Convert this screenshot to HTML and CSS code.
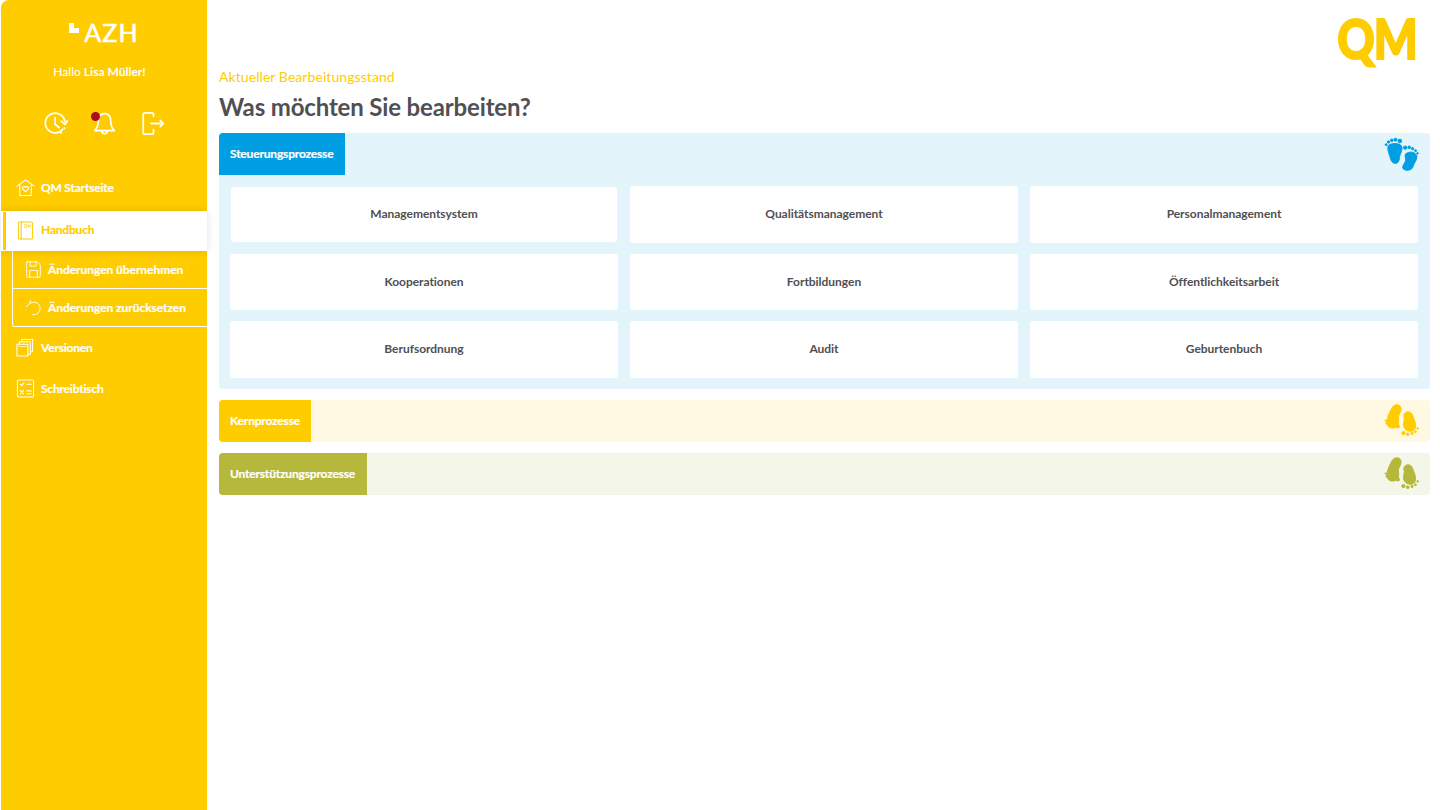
FILE: index.html
```html
<!DOCTYPE html>
<html lang="de">
<head>
<meta charset="utf-8">
<title>QM Handbuch</title>
<link rel="stylesheet" href="styles.css">
</head>
<body>
<svg class="defs" width="0" height="0" aria-hidden="true">
  <symbol id="feet-up" viewBox="190 410 110 105">
    <path d="M204 442C203 430 226 427 239 432C250 437 247 451 241 463C237 473 241 489 226 489C213 489 212 472 208 462C205 454 204 448 204 442Z"/>
    <circle cx="199" cy="433" r="3"/><circle cx="206" cy="425" r="3.500"/><circle cx="216" cy="420" r="4"/><circle cx="227" cy="418" r="4.500"/><circle cx="240" cy="422" r="5.500"/>
    <path d="M257 461C269 451 289 455 291 468C292 480 282 488 280 498C277 511 258 513 250 505C245 498 255 490 257 481C258 473 254 467 257 461Z"/>
    <circle cx="256" cy="442" r="5"/><circle cx="268" cy="441" r="4"/><circle cx="278" cy="445" r="3.500"/><circle cx="287" cy="451" r="3"/><circle cx="293" cy="459" r="2.500"/>
  </symbol>
  <symbol id="feet-down" viewBox="130 40 110 100">
    <path d="M158 52C166 41 184 44 184 58C184 70 173 76 176 88C179 102 174 116 158 116C144 116 138 104 141 92C144 78 150 64 158 52Z"/>
    <circle cx="137" cy="93" r="2"/><circle cx="140" cy="101" r="2.500"/><circle cx="150" cy="109" r="3"/><circle cx="162" cy="111" r="3.500"/><circle cx="174" cy="111" r="5"/>
    <path d="M192 76C198 62 214 64 219 78C224 92 232 108 225 120C216 130 197 127 192 112C189 100 196 92 192 76Z"/>
    <circle cx="191" cy="131" r="5"/><circle cx="204" cy="135" r="4"/><circle cx="217" cy="132" r="3.500"/><circle cx="227" cy="127" r="3"/><circle cx="234" cy="117" r="2.500"/>
  </symbol>
</svg>
<div class="app">
  <aside class="sidebar">
    <div class="brand">
      <span class="brand-mark"></span>
      <span class="brand-name">AZH</span>
    </div>
    <p class="hello">Hallo <b>Lisa Müller!</b></p>
    <div class="quick">
      <svg class="quick-icon" viewBox="0 0 28 28"><path d="M22 20.500A11 11 0 1 1 24.500 12"/><path d="M13.500 7.500V15l4.500 3.500"/><path d="M20.500 11.500l4 3.500 3-4"/><path d="M24 19v.5M20 24v.5"/></svg>
      <span class="bell">
        <svg class="quick-icon" viewBox="0 0 28 28"><path d="M14 3c-5 0-7 4-7 9 0 5-2 8-4 10h22c-2-2-4-5-4-10 0-5-2-9-7-9Z"/><path d="M11 22.500c0 4 6 4 6 0"/></svg>
        <i class="bell-dot"></i>
      </span>
      <svg class="quick-icon" viewBox="0 0 28 28"><path d="M14 6V3.500C14 2 13.500 2 12 2H4.500C3 2 2.500 2.500 2.500 4v20c0 1.500.5 2 2 2H12c1.500 0 2-.5 2-2v-3"/><path d="M11 14h14M21.500 10.500 25 14l-3.500 3.500"/></svg>
    </div>
    <nav class="nav">
      <a class="nav-row nav-first">
        <svg class="nav-icon" viewBox="0 0 20 20"><path d="M1 8.500 10 2l9 6.500M4 7v11.500h12V7"/><path d="M10 14.500 7 11.500c-1-2 1.500-3.500 3-1.500 1.500-2 4-.5 3 1.500Z"/></svg>
        <span>QM Startseite</span>
      </a>
      <a class="nav-row nav-active">
        <svg class="nav-icon" viewBox="0 0 20 20"><rect x="2.500" y="1" width="15" height="18" rx="1.500"/><path d="M5.500 1v18"/><path class="thin" d="M9 4h2.500v2.500H9zM13 6.500V4l1 1.500L15 4v2.500"/></svg>
        <span>Handbuch</span>
      </a>
      <div class="subnav">
        <a class="sub-row">
          <svg class="sub-icon" viewBox="0 0 20 20"><path d="M2.500 1h12L18 4.500V17.500a1.500 1.500 0 0 1-1.500 1.500h-13A1.500 1.500 0 0 1 2 17.500V2.500A1.500 1.500 0 0 1 2.500 1Z"/><path d="M6 1v5h7V1M5.500 19v-8h9v8"/></svg>
          <span>Änderungen übernehmen</span>
        </a>
        <a class="sub-row">
          <svg class="sub-icon" viewBox="0 0 20 20"><path d="M6 5a7.500 7.500 0 1 1 3 13.500"/><path d="M6.500 2 5.500 5.500 1.500 9"/></svg>
          <span>Änderungen zurücksetzen</span>
        </a>
      </div>
      <a class="nav-row">
        <svg class="nav-icon" viewBox="0 0 20 20"><path d="M6 4V1.500h11.500v13H15M3.500 6.500V4H15v13h-2"/><rect x="1" y="6.500" width="11.500" height="12.500"/><path class="thin" d="M3 9h7.500"/></svg>
        <span>Versionen</span>
      </a>
      <a class="nav-row">
        <svg class="nav-icon" viewBox="0 0 20 20"><rect x="1.500" y="1" width="17" height="18" rx="1.500"/><path d="M4.500 5.500l1.500 1.500 2.500-3M11.500 5.500H16M4.500 12l3.500 4M8 12l-3.500 4M11.500 12.500H16M11.500 15.500H16"/></svg>
        <span>Schreibtisch</span>
      </a>
    </nav>
  </aside>
  <main class="content">
    <div class="qm-row"><span class="qm-logo">QM</span></div>
    <p class="eyebrow">Aktueller Bearbeitungsstand</p>
    <h1 class="title">Was möchten Sie bearbeiten?</h1>

    <section class="group group-blue">
      <header class="group-head">
        <span class="group-tab">Steuerungsprozesse</span>
        <svg class="feet"><use href="#feet-up"/></svg>
      </header>
      <div class="tiles">
        <a class="tile tile-first">Managementsystem</a>
        <a class="tile">Qualitätsmanagement</a>
        <a class="tile">Personalmanagement</a>
        <a class="tile">Kooperationen</a>
        <a class="tile">Fortbildungen</a>
        <a class="tile">Öffentlichkeitsarbeit</a>
        <a class="tile">Berufsordnung</a>
        <a class="tile">Audit</a>
        <a class="tile">Geburtenbuch</a>
      </div>
    </section>

    <section class="group group-yellow">
      <header class="group-head">
        <span class="group-tab">Kernprozesse</span>
        <svg class="feet feet-low"><use href="#feet-down"/></svg>
      </header>
    </section>

    <section class="group group-green">
      <header class="group-head">
        <span class="group-tab">Unterstützungsprozesse</span>
        <svg class="feet feet-low"><use href="#feet-down"/></svg>
      </header>
    </section>
  </main>
</div>
</body>
</html>
```

FILE: styles.css
```css
* { box-sizing: border-box; }
html, body { margin: 0; height: 100%; overflow: hidden; background: #fff; }
body { font-family: "Lato", "Liberation Sans", sans-serif; color: #4f4f52; }
.defs { display: block; height: 0; }
p, h1 { margin: 0; }

.app { display: flex; height: 810px; }

.sidebar {
  flex: 0 0 206px;
  margin-left: 1px;
  background: #ffcc00;
  border-top-left-radius: 8px;
  color: #fff;
}
.brand { display: flex; justify-content: center; align-items: flex-start; gap: 5px; padding-top: 19px; height: 52px; }
.brand-mark { width: 10px; height: 10px; margin-top: 4px; background: linear-gradient(#fff, #fff) 0 0 / 5px 10px no-repeat, linear-gradient(#fff, #fff) 0 100% / 10px 5px no-repeat; }
.brand-name { font-size: 25px; line-height: 26px; letter-spacing: 1.2px; font-weight: 400; -webkit-text-stroke: .6px #fff; }
.hello { font-size: 12px; line-height: 16px; text-align: center; padding: 12px 9px 0 0; height: 38px; }
.hello b { font-weight: 700; }
.quick { display: flex; justify-content: center; align-items: center; gap: 24px; height: 75px; padding: 3px 0 11px; }
.quick-icon { width: 25px; height: 25px; fill: none; stroke: #fff; stroke-width: 2; stroke-linecap: round; stroke-linejoin: round; display: block; }
.bell { position: relative; display: block; }
.bell-dot { position: absolute; left: -1px; top: 1px; width: 9px; height: 9px; border-radius: 50%; background: #b00a23; }

.nav { display: flex; flex-direction: column; }
.nav-row { display: flex; align-items: center; gap: 6px; height: 41px; padding-left: 15px; font-size: 12px; font-weight: 700; letter-spacing: -.2px; color: #fff; -webkit-text-stroke: .2px currentColor; }
.nav-first { height: 46px; padding-bottom: 1px; }
.nav-active { height: 40px; padding-left: 2px; padding-bottom: 3px; background: #fff; color: #ffcc00; box-shadow: 0 0 8px rgba(0,0,0,.12); position: relative; }
.nav-active::before { content: ""; flex: 0 0 3px; align-self: stretch; margin: 1px 0 -2px; background: #ffcc00; }
.nav-active .nav-icon { margin: 2px 0 0 4px; }
.nav-icon { width: 19px; height: 19px; flex: none; fill: none; stroke: currentColor; stroke-width: 1.1; stroke-linejoin: round; stroke-linecap: round; }
.thin { stroke-width: .7; }
.subnav { margin-left: 11px; border-left: 1px solid #fff; border-bottom-left-radius: 3px; }
.sub-row { display: flex; align-items: center; gap: 6px; height: 38px; padding: 0 0 1px 12px; border-bottom: 1px solid #fff; font-size: 12px; font-weight: 700; letter-spacing: -.05px; color: #fff; -webkit-text-stroke: .2px currentColor; }
.sub-icon { width: 17px; height: 17px; flex: none; fill: none; stroke: currentColor; stroke-width: 1.1; stroke-linejoin: round; stroke-linecap: round; }

.content { flex: 1; min-width: 0; padding: 0 10px 0 12px; }
.qm-row { display: flex; justify-content: flex-end; height: 69px; padding: 12px 13px 0 0; }
.qm-logo { display: block; height: 52px; font-size: 55px; line-height: 52px; font-weight: 900; color: #ffcc00; letter-spacing: -1px; -webkit-text-stroke: 2px #ffcc00; transform: scaleX(.84); transform-origin: right center; }
.eyebrow { font-size: 14px; line-height: 17px; margin-top: -1px; color: #ffcc00; font-weight: 400; letter-spacing: .07px; }
.title { font-size: 24px; line-height: 30px; font-weight: 700; letter-spacing: -.15px; color: #505054; margin-top: 7px; margin-bottom: 11px; }

.group { border-radius: 4px; margin-bottom: 11px; overflow: hidden; }
.group-head { display: flex; justify-content: space-between; align-items: center; height: 42px; padding-right: 10px; }
.group-tab { display: flex; align-items: center; height: 42px; padding: 0 11.5px 1px 11px; font-size: 12px; font-weight: 700; letter-spacing: -.18px; color: #fff; -webkit-text-stroke: .2px #fff; }
.feet { width: 37px; height: 35px; display: block; stroke-width: 3; }
.feet-low { height: 33px; margin-bottom: 2px; }
.group-blue { background: #e3f4fb; }
.group-blue .group-tab { background: #009fe3; }
.group-blue .feet { fill: #009fe3; stroke: #009fe3; }
.group-yellow { background: #fff8e3; }
.group-yellow .group-tab { background: #ffcc00; }
.group-yellow .feet { fill: #ffcc00; stroke: #ffcc00; }
.group-green { background: #f5f6ea; }
.group-green .group-tab { background: #b5b83a; }
.group-green .feet { fill: #b5b83a; stroke: #b5b83a; }

.tiles { display: grid; grid-template-columns: repeat(3, 1fr); grid-auto-rows: 56.67px; gap: 11px 12px; padding: 11px 12px 11px 11px; }
.tile { display: flex; align-items: center; justify-content: center; padding-bottom: 1.5px; background: #fff; border-radius: 3px; font-size: 12px; font-weight: 700; letter-spacing: -.03px; color: #4f4f52; }
.tile-first { margin: 1px; }
```
